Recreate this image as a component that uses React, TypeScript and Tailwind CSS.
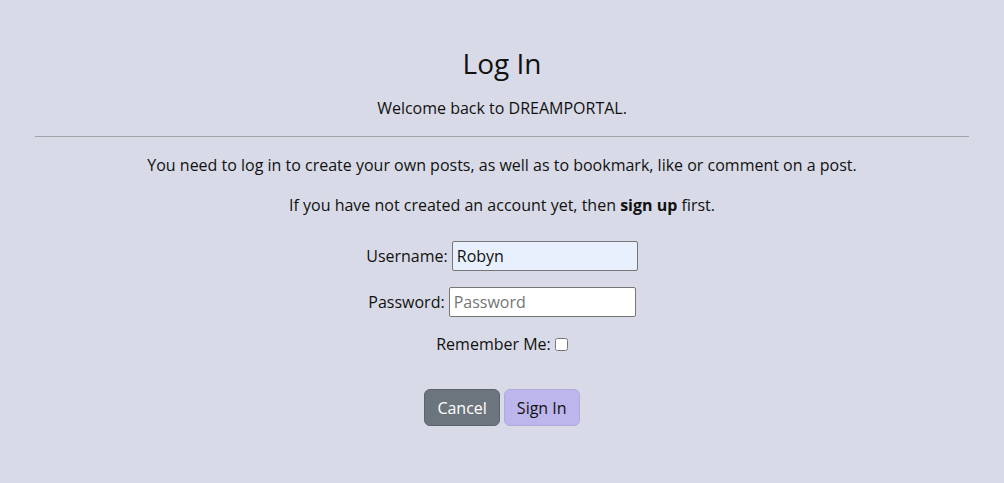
import React, { useState } from 'react';

const App: React.FC = () => {
  const [username, setUsername] = useState('Robyn');
  const [password, setPassword] = useState('');

  return (
    <div className="min-h-[483px] bg-[#d8dbe7] text-[#111] font-['Open_Sans',sans-serif]">
      <div className="px-[35px] pt-[44px] text-center">
        <h1 className="text-[28px] leading-[38px] font-normal">Log In</h1>
        <p className="mt-[14px] text-[16px] leading-[24px]">Welcome back to DREAMPORTAL.</p>
        <hr className="mt-[16px] border-t border-[#a3a5ab]" />
        <p className="mt-[16px] text-[16px] leading-[24px]">
          You need to log in to create your own posts, as well as to bookmark, like or comment on a post.
        </p>
        <p className="mt-[16px] text-[16px] leading-[24px]">
          If you have not created an account yet, then <span className="font-bold">sign up</span> first.
        </p>

        <form className="mt-[24px] flex flex-col items-center">
          <div className="flex items-center gap-[4px]">
            <label className="text-[16px]">Username:</label>
            <input
              value={username}
              onChange={e => setUsername(e.target.value)}
              className="w-[186px] h-[30px] px-[4px] bg-[#e8f0fe] border border-[#767676] rounded-[2px] text-[16px] outline-none"
            />
          </div>
          <div className="mt-[16px] flex items-center gap-[4px]">
            <label className="text-[16px]">Password:</label>
            <input
              type="password"
              placeholder="Password"
              value={password}
              onChange={e => setPassword(e.target.value)}
              className="w-[187px] h-[30px] px-[4px] bg-white border border-[#767676] rounded-[2px] text-[16px] outline-none placeholder:text-[#757575]"
            />
          </div>
          <div className="mt-[15px] flex items-center gap-[4px]">
            <label className="text-[16px]">Remember Me:</label>
            <input type="checkbox" className="w-[13px] h-[13px]" />
          </div>

          <div className="mt-[33px] flex items-center gap-[4px]">
            <button type="button" className="h-[37px] px-[12px] rounded-[6px] bg-[#6c757d] border border-[#5c636a] text-white text-[16px]">
              Cancel
            </button>
            <button type="submit" className="h-[37px] px-[12px] rounded-[6px] bg-[#bdb6ec] border border-[#b0aae0] text-[#111] text-[16px]">
              Sign In
            </button>
          </div>
        </form>
      </div>
    </div>
  );
};

export default App;
